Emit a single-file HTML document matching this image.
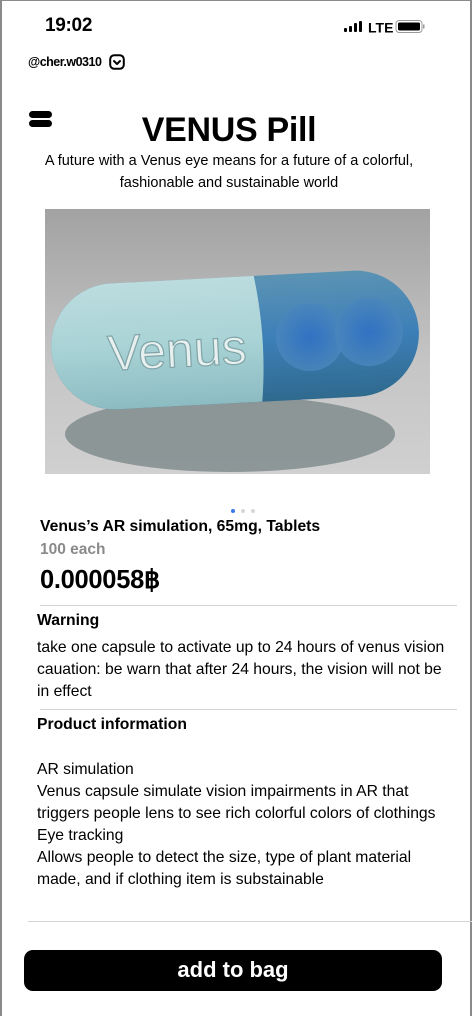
<!DOCTYPE html>
<html><head><meta charset="utf-8"><style>
*{margin:0;padding:0;box-sizing:border-box}
body{width:472px;height:1016px;overflow:hidden;background:#fff;font-family:"Liberation Sans",Arial,sans-serif;color:#000;position:relative}
.frame{position:absolute;left:0;top:0;width:472px;height:1016px;border-left:2px solid #8a8a8a;border-right:2px solid #8a8a8a;border-top:1px solid #8a8a8a}
.a{position:absolute;white-space:nowrap}
.hr{position:absolute;height:1px;background:#d4d4d4}
</style></head><body>
<div class="frame"></div>
<div class="a" style="left:45px;top:15px;font-size:19px;font-weight:bold;letter-spacing:-0.3px">19:02</div>
<div class="a" style="left:344px;top:20px">
<svg width="82" height="16" viewBox="0 0 82 16">
<rect x="0" y="8" width="3" height="4" rx="1"/><rect x="5" y="6" width="3" height="6" rx="1"/><rect x="10" y="3" width="3" height="9" rx="1"/><rect x="15" y="1" width="3" height="11" rx="1"/>
<text x="24" y="12.5" font-size="14" font-weight="bold" font-family="Liberation Sans">LTE</text>
<rect x="52" y="0.5" width="26" height="12" rx="3" fill="none" stroke="#999"/><rect x="54" y="2.5" width="22" height="8" rx="1.5"/><rect x="79" y="4.5" width="1.5" height="4" fill="#999"/>
</svg></div>
<div class="a" style="left:28px;top:55px;font-size:12.5px;font-weight:bold;letter-spacing:-0.5px">@cher.w0310</div>
<svg class="a" style="left:109px;top:54px" width="16" height="16" viewBox="0 0 16 16"><rect x="1.2" y="1.2" width="13.6" height="13.6" rx="4" fill="none" stroke="#000" stroke-width="2"/><path d="M5 7 L8 10 L11 7" fill="none" stroke="#000" stroke-width="2" stroke-linecap="round" stroke-linejoin="round"/></svg>
<div class="a" style="left:29px;top:111px;width:23px;height:7px;border-radius:4px;background:#000"></div>
<div class="a" style="left:29px;top:120px;width:23px;height:7px;border-radius:4px;background:#000"></div>
<div class="a" style="left:0;width:458px;text-align:center;top:111px;font-size:34px;font-weight:bold;letter-spacing:-0.3px">VENUS Pill</div>
<div class="a" style="left:0;width:458px;text-align:center;top:150px;font-size:14.5px;line-height:22px">A future with a Venus eye means for a future of a colorful,<br>fashionable and sustainable world</div>
<svg class="a" style="left:45px;top:209px" width="385" height="265" viewBox="0 0 385 265">
<defs>
<linearGradient id="bg" x1="0" y1="0" x2="0" y2="1"><stop offset="0" stop-color="#a2a2a2"/><stop offset="0.6" stop-color="#c6c6c6"/><stop offset="1" stop-color="#d0d0d0"/></linearGradient>
<linearGradient id="lt" x1="0" y1="0" x2="0" y2="1"><stop offset="0" stop-color="#bcdcdf"/><stop offset="0.5" stop-color="#a9d3d6"/><stop offset="1" stop-color="#8cbcc2"/></linearGradient>
<linearGradient id="bl" x1="0" y1="0" x2="0" y2="1"><stop offset="0" stop-color="#5b93b3"/><stop offset="0.5" stop-color="#3d7fb8"/><stop offset="1" stop-color="#2f6a8e"/></linearGradient>
<radialGradient id="ball"><stop offset="0" stop-color="#2f6fc4"/><stop offset="1" stop-color="#4a86bc"/></radialGradient>
</defs>
<rect width="385" height="265" fill="url(#bg)"/>
<ellipse cx="185" cy="225" rx="165" ry="38" fill="#7c8889" opacity="0.8"/>
<g transform="rotate(-3 190 130)">
<rect x="6" y="68" width="368" height="126" rx="63" fill="url(#bl)"/>
<circle cx="265" cy="132" r="34" fill="url(#ball)" opacity="0.85"/>
<circle cx="324" cy="130" r="34" fill="url(#ball)" opacity="0.85"/>
<path d="M69 68 H212 Q222 131 214 194 H69 A63 63 0 0 1 69 68Z" fill="url(#lt)"/>
<text x="62" y="155" font-size="50" fill="#e8efef" stroke="#7fa4a7" stroke-width="1.2" font-family="Liberation Sans">Venus</text>
</g>
</svg>
<div class="a" style="left:231px;top:509px;width:4px;height:4px;border-radius:2px;background:#3b78e7"></div>
<div class="a" style="left:241px;top:509px;width:4px;height:4px;border-radius:2px;background:#d8d8d8"></div>
<div class="a" style="left:251px;top:509px;width:4px;height:4px;border-radius:2px;background:#d8d8d8"></div>
<div class="a" style="left:40px;top:518px;font-size:15.7px;font-weight:bold">Venus’s AR simulation, 65mg, Tablets</div>
<div class="a" style="left:40px;top:541px;font-size:15.5px;font-weight:bold;color:#8a8a8a">100 each</div>
<div class="a" style="left:40px;top:565px;font-size:25.5px;font-weight:bold;letter-spacing:-0.3px">0.000058฿</div>
<div class="hr" style="left:40px;width:417px;top:605px"></div>
<div class="a" style="left:37px;top:612px;font-size:15.7px;font-weight:bold">Warning</div>
<div class="a" style="left:37px;top:637px;font-size:15.7px;line-height:22px">take one capsule to activate up to 24 hours of venus vision<br>cauation: be warn that after 24 hours, the vision will not be<br>in effect</div>
<div class="hr" style="left:40px;width:417px;top:709px"></div>
<div class="a" style="left:37px;top:716px;font-size:15.7px;font-weight:bold">Product information</div>
<div class="a" style="left:37px;top:759px;font-size:15.7px;line-height:22px">AR simulation<br>Venus capsule simulate vision impairments in AR that<br>triggers people lens to see rich colorful colors of clothings<br>Eye tracking<br>Allows people to detect the size, type of plant material<br>made, and if clothing item is substainable</div>
<div class="hr" style="left:28px;width:444px;top:921px"></div>
<div class="a" style="left:24px;top:950px;width:418px;height:41px;border-radius:9px;background:#000;color:#fff;text-align:center;font-size:22px;font-weight:bold;line-height:40px">add to bag</div>
</body></html>
